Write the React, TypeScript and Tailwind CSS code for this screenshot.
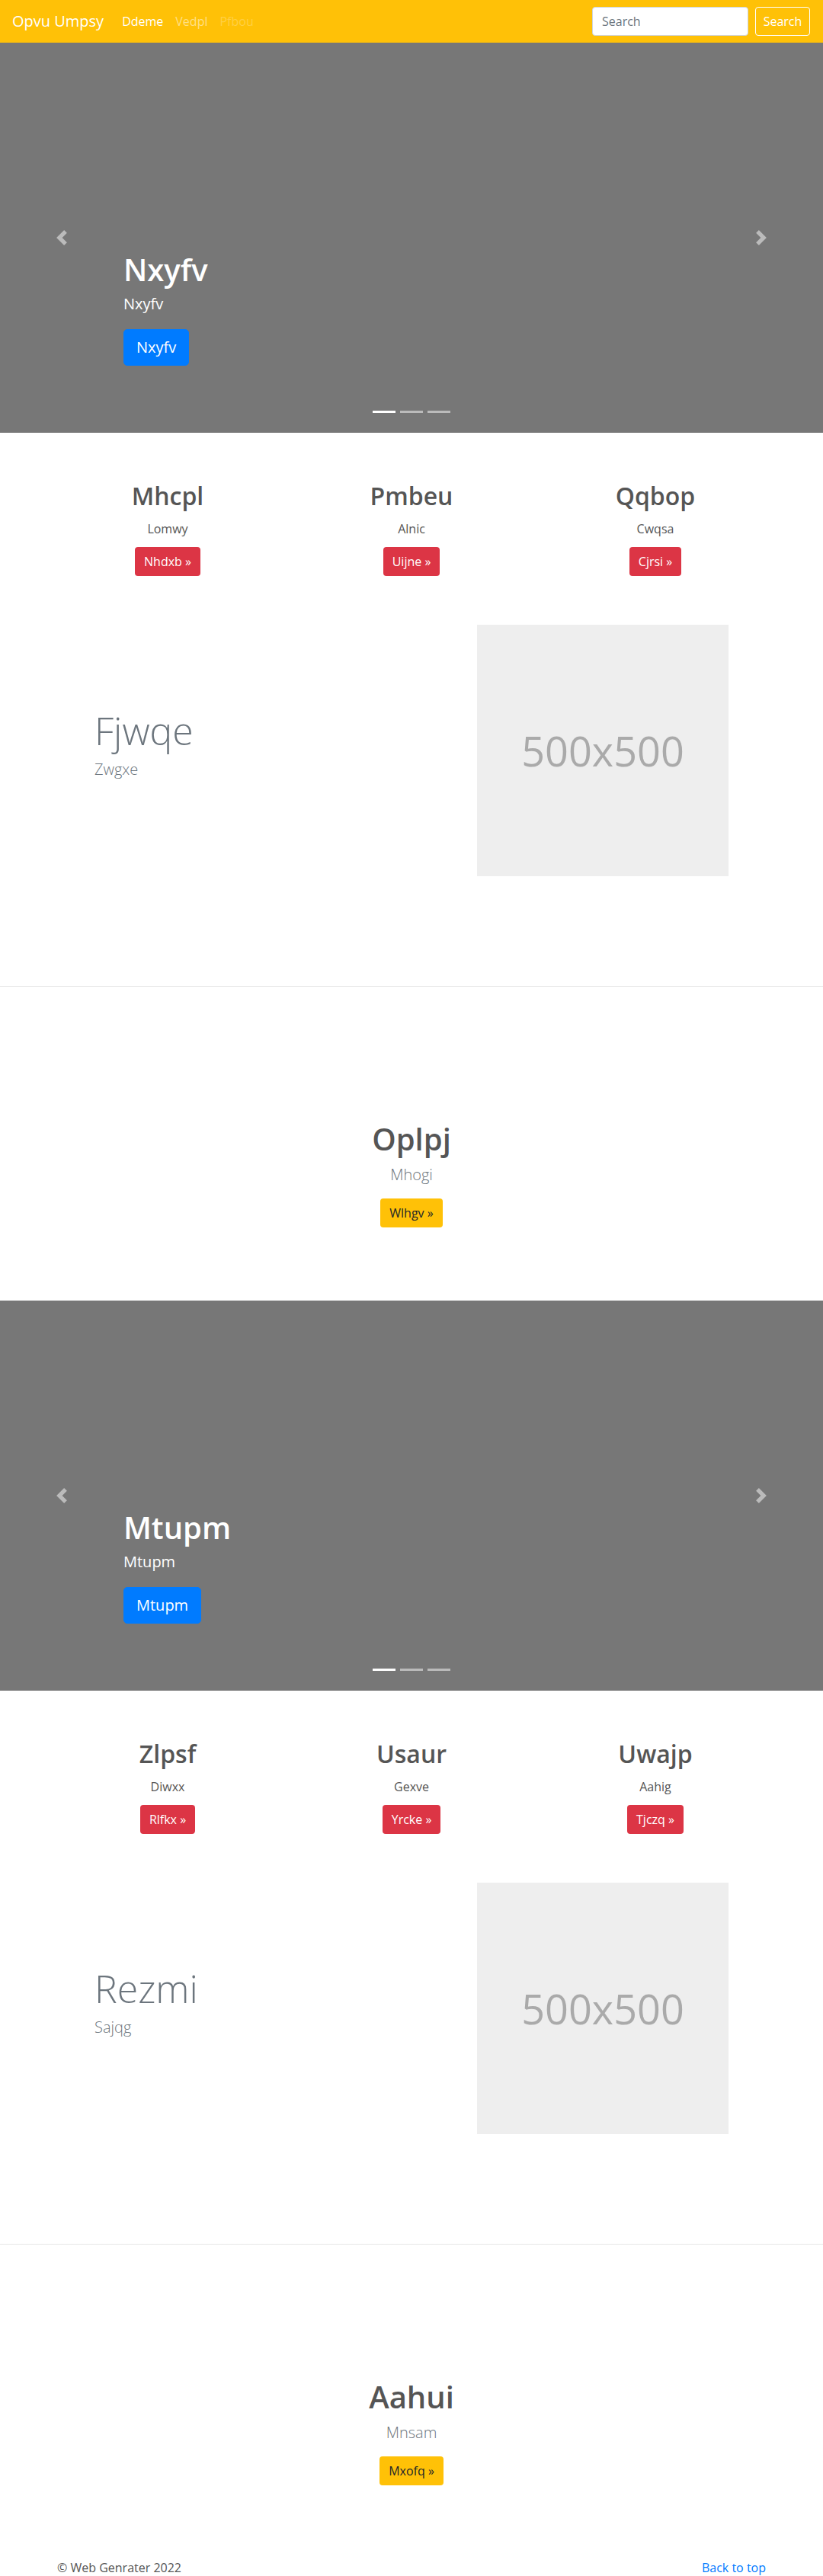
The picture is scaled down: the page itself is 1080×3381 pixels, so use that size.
const font = { fontFamily: '"Segoe UI", "Open Sans", "Noto Sans", sans-serif' };

type Col = { title: string; text: string; btn: string };

type BlockData = {
  slide: string;
  cols: Col[];
  feature: { title: string; text: string };
  section: { title: string; text: string; btn: string };
};

const blocks: BlockData[] = [
  {
    slide: "Nxyfv",
    cols: [
      { title: "Mhcpl", text: "Lomwy", btn: "Nhdxb »" },
      { title: "Pmbeu", text: "Alnic", btn: "Uijne »" },
      { title: "Qqbop", text: "Cwqsa", btn: "Cjrsi »" },
    ],
    feature: { title: "Fjwqe", text: "Zwgxe" },
    section: { title: "Oplpj", text: "Mhogi", btn: "Wlhgv »" },
  },
  {
    slide: "Mtupm",
    cols: [
      { title: "Zlpsf", text: "Diwxx", btn: "Rlfkx »" },
      { title: "Usaur", text: "Gexve", btn: "Yrcke »" },
      { title: "Uwajp", text: "Aahig", btn: "Tjczq »" },
    ],
    feature: { title: "Rezmi", text: "Sajqg" },
    section: { title: "Aahui", text: "Mnsam", btn: "Mxofq »" },
  },
];

function Navbar() {
  return (
    <nav className="h-14 bg-[#ffc107] flex items-center justify-between pl-4 pr-[17px]">
      <div className="flex items-center">
        <a className="text-xl leading-[30px] text-white mr-6">Opvu Umpsy</a>
        <div className="flex items-center gap-4 text-base">
          <a className="text-white">Ddeme</a>
          <a className="text-white/50">Vedpl</a>
          <a className="text-white/25">Pfbou</a>
        </div>
      </div>
      <form className="flex items-center gap-[9px]" onSubmit={(e) => e.preventDefault()}>
        <input
          placeholder="Search"
          className="w-[205px] h-[38px] px-3 text-base bg-white border border-[#ced4da] rounded-[4px] placeholder:text-[#6c757d] outline-none"
          style={font}
        />
        <button className="h-[38px] w-[72px] text-base text-white border border-white rounded-[4px]">
          Search
        </button>
      </form>
    </nav>
  );
}

function Carousel({ label }: { label: string }) {
  return (
    <div className="relative h-[512px] bg-[#777]">
      {/* prev / next */}
      <div className="absolute left-0 top-0 bottom-0 w-[15%] flex items-center justify-center opacity-50">
        <svg width="20" height="20" viewBox="0 0 8 8" fill="#fff">
          <path d="M5.25 0l-4 4 4 4 1.5-1.5L4.25 4l2.5-2.5L5.25 0z" />
        </svg>
      </div>
      <div className="absolute right-0 top-0 bottom-0 w-[15%] flex items-center justify-center opacity-50">
        <svg width="20" height="20" viewBox="0 0 8 8" fill="#fff">
          <path d="M2.75 0l-1.5 1.5L3.75 4l-2.5 2.5L2.75 8l4-4-4-4z" />
        </svg>
      </div>

      {/* caption */}
      <div className="absolute left-[162px] bottom-[88px] text-white">
        <h1 className="text-[40px] leading-[48px] font-semibold mb-[6px]">{label}</h1>
        <p className="text-xl leading-[30px] mb-[18px]">{label}</p>
        <a className="inline-block px-4 py-2 text-xl leading-[30px] bg-[#007bff] border border-[#007bff] rounded-[5px]">
          {label}
        </a>
      </div>

      {/* indicators */}
      <div className="absolute bottom-[26px] left-0 right-0 flex justify-center gap-[6px]">
        <span className="w-[30px] h-[3px] bg-white" />
        <span className="w-[30px] h-[3px] bg-white/50" />
        <span className="w-[30px] h-[3px] bg-white/50" />
      </div>
    </div>
  );
}

function Block({ data }: { data: BlockData }) {
  return (
    <div>
      <Carousel label={data.slide} />

      {/* Marketing columns */}
      <div className="w-[960px] mx-auto mt-16 grid grid-cols-3">
        {data.cols.map((c) => (
          <div key={c.title} className="px-[15px] flex flex-col items-center text-center">
            <h2 className="text-[32px] leading-[38px] font-semibold text-[#555] mb-3">{c.title}</h2>
            <p className="text-base leading-6 text-[#555] mb-3">{c.text}</p>
            <a className="h-[38px] px-3 flex items-center text-base text-white bg-[#dc3545] rounded-[4px]">
              {c.btn}
            </a>
          </div>
        ))}
      </div>

      {/* Featurette */}
      <div className="mt-16 px-[124px] flex items-center justify-between">
        <div className="-mt-4">
          <h2 className="text-[50px] leading-[60px] font-light text-[#6c757d] mb-[6px]">
            {data.feature.title}
          </h2>
          <p className="text-xl leading-[30px] font-light text-[#6c757d]">{data.feature.text}</p>
        </div>
        <div className="w-[330px] h-[330px] bg-[#eee] flex items-center justify-center">
          <span className="text-[54px] text-[#aaa]">500x500</span>
        </div>
      </div>

      <hr className="mt-[144px] border-t border-[#e5e5e5]" />

      {/* Centered section */}
      <div className="pt-[176px] pb-[96px] flex flex-col items-center text-center">
        <h2 className="text-[40px] leading-[48px] font-semibold text-[#555] mb-2">{data.section.title}</h2>
        <p className="text-xl leading-[30px] font-light text-[#6c757d] mb-4">{data.section.text}</p>
        <a className="h-[38px] px-3 flex items-center text-base text-[#212529] bg-[#ffc107] rounded-[4px]">
          {data.section.btn}
        </a>
      </div>
    </div>
  );
}

export default function App() {
  return (
    <div className="bg-white" style={font}>
      <Navbar />
      {blocks.map((b) => (
        <Block key={b.slide} data={b} />
      ))}
      <footer className="w-[960px] mx-auto px-[15px] flex justify-between text-base leading-6">
        <p className="text-[#555]">© Web Genrater 2022</p>
        <a className="text-[#007bff]">Back to top</a>
      </footer>
    </div>
  );
}
